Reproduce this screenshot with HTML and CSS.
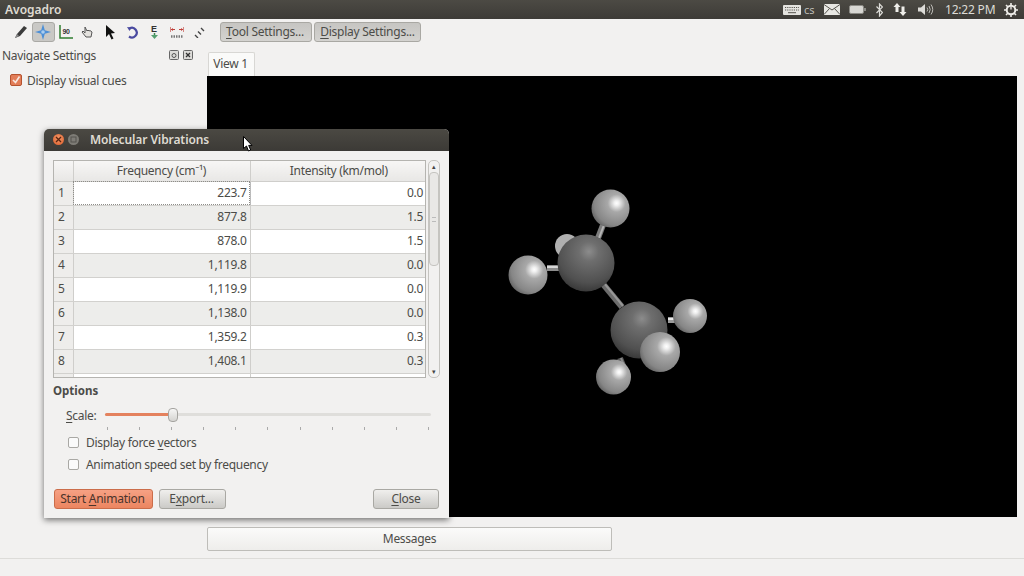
FILE: index.html
```html
<!DOCTYPE html>
<html lang="en">
<head>
<meta charset="utf-8">
<title>Avogadro</title>
<link rel="stylesheet" href="styles.css">
</head>
<body>
<div class="app">
  <header class="topbar">
    <span class="app-name">Avogadro</span>
    <div class="tray">
      <svg class="ti" width="18" height="10" viewBox="0 0 18 10"><rect width="18" height="10" rx="1" fill="#e4e3df"/><path d="M2 2.500h14M2 5h14" stroke="#55534d" stroke-width="1" stroke-dasharray="1.200 1"/><path d="M5 7.700h8" stroke="#55534d"/></svg>
      <span class="tray-cs">cs</span>
      <svg class="ti ti-mail" width="16" height="11" viewBox="0 0 16 11"><rect width="16" height="11" fill="#e8e7e3"/><path d="M0 .5l8 5.500 8-5.500M0 10.500l5.500-6M16 10.500l-5.500-6" stroke="#55534d" fill="none"/></svg>
      <svg class="ti ti-batt" width="17" height="9" viewBox="0 0 17 9"><rect x=".5" y=".5" width="14" height="8" rx="1.500" fill="#d8d7d3" stroke="#8b8a85"/><rect x="15" y="3" width="2" height="3" fill="#8b8a85"/></svg>
      <svg class="ti ti-bt" width="7" height="14" viewBox="0 0 7 14"><path d="M.5 3.500l6 6-3 3.500V1l3 3-6 6" fill="none" stroke="#dcdbd7" stroke-width="1.200"/></svg>
      <svg class="ti ti-net" width="14" height="13" viewBox="0 0 14 13"><path d="M4 0L7.500 4H5.500V9H2.500V4H.5z" fill="#eeede9"/><path d="M10 13L6.500 9H8.500V3.500h3V9h2z" fill="#eeede9"/></svg>
      <svg class="ti ti-vol" width="16" height="13" viewBox="0 0 16 13"><path d="M0 4.500h3L7 1v11L3 8.500H0z" fill="#dcdbd7"/><path d="M9 4.500q1.500 2 0 4M11 3q2.500 3.500 0 7M13 1.500q3.500 5 0 10" fill="none" stroke="#bdbcb7"/></svg>
      <span class="clock">12:22 PM</span>
      <svg class="ti ti-gear" width="14" height="14" viewBox="0 0 14 14"><circle cx="7" cy="7" r="4.300" fill="none" stroke="#eeede9" stroke-width="2"/><path d="M7 0v3M7 11v3M0 7h3M11 7h3M2 2l2 2M10 10l2 2M12 2l-2 2M4 10l-2 2" stroke="#eeede9" stroke-width="1.600"/><path d="M7 3.500v3" stroke="#eeede9" stroke-width="1.300"/></svg>
    </div>
  </header>

  <nav class="toolbar">
    <div class="tools">
      <span class="tool"><svg width="14" height="14" viewBox="0 0 14 14"><path d="M1 13l2-4 7-8 3 2-7 8z" fill="#3b3b3b"/><path d="M1 13l2-4 2 2z" fill="#8a8a8a"/></svg></span>
      <span class="tool tool-on"><svg width="16" height="16" viewBox="0 0 16 16"><path d="M8 0l1.800 6.200L16 8l-6.200 1.800L8 16l-1.800-6.200L0 8l6.200-1.800z" fill="#4d8fd6"/><circle cx="8" cy="8" r="1.800" fill="#a9cdf0"/></svg></span>
      <span class="tool"><svg width="14" height="14" viewBox="0 0 14 14"><path d="M1 0v13h13" fill="none" stroke="#2f7d2f" stroke-width="1.500"/><text x="3.500" y="9" class="ic-text">90</text></svg></span>
      <span class="tool"><svg width="13" height="14" viewBox="0 0 13 14"><path d="M4 2l2 4 1-1 1 1 1-.500 2 1.500-1 5H5L1 7l1-1 2 2z" fill="#e4e2de" stroke="#555" stroke-width="1"/></svg></span>
      <span class="tool"><svg width="11" height="15" viewBox="0 0 11 15"><path d="M1 0l9 8-4 .500 2.500 5-2 1-2.500-5.500-3 3z" fill="#111"/></svg></span>
      <span class="tool"><svg width="13" height="13" viewBox="0 0 13 13"><path d="M3.500 2.500A4.800 4.800 0 1 1 3 10.500" fill="none" stroke="#4a4aa0" stroke-width="2.200"/><path d="M1 1l4.500.500-2 3.500z" fill="#4a4aa0"/></svg></span>
      <span class="tool"><svg width="9" height="16" viewBox="0 0 9 16"><text x="1" y="8" class="ic-e">E</text><path d="M4.500 9v2" stroke="#3c8a55" stroke-width="1.500"/><path d="M1 11h7l-3.500 4z" fill="#55a070"/></svg></span>
      <span class="tool"><svg width="14" height="13" viewBox="0 0 14 13"><path d="M0 1v5M14 1v5M1 3.500h4M9 3.500h4" stroke="#c0403a" stroke-width="1.200"/><path d="M1 3.500l2-1.500v3zM13 3.500l-2-1.500v3z" fill="#c0403a"/><path d="M1 10.500h12" stroke="#777" stroke-width="2.500" stroke-dasharray="1.500 1"/></svg></span>
      <span class="tool"><svg width="11" height="11" viewBox="0 0 11 11"><path d="M1 8l3 3M4 4.500l3 3M7 1l3 3" stroke="#444" stroke-width="1.400"/></svg></span>
    </div>
    <div class="tb-buttons">
      <button class="btn btn-pressed btn-tool"><u>T</u>ool Settings...</button>
      <button class="btn btn-pressed btn-disp"><u>D</u>isplay Settings...</button>
    </div>
  </nav>

  <div class="workspace">
    <aside class="dock">
      <div class="dock-head">
        <span>Navigate Settings</span>
        <span class="dock-btns">
          <svg width="10" height="10" viewBox="0 0 10 10"><rect x=".5" y=".5" width="9" height="9" rx="1" fill="#dcdbd8" stroke="#666"/><circle cx="5" cy="5.500" r="2" fill="none" stroke="#555"/></svg>
          <svg width="10" height="10" viewBox="0 0 10 10"><rect x=".5" y=".5" width="9" height="9" rx="1" fill="#dcdbd8" stroke="#666"/><path d="M3 3l4 4M7 3l-4 4" stroke="#333" stroke-width="1.300"/></svg>
        </span>
      </div>
      <label class="dock-check">
        <span class="cb cb-on"><svg width="12" height="12" viewBox="0 0 12 12"><path d="M3 6l2.500 2.500L9.500 2.500" fill="none" stroke="#f7e7df" stroke-width="1.700"/></svg></span>
        <span>Display visual cues</span>
      </label>
    </aside>

    <main class="central">
      <div class="tab">View 1</div>
      <div class="view">
        <svg class="scene" viewBox="207 76 810 441" preserveAspectRatio="none">
          <defs>
            <radialGradient id="carbon" cx=".55" cy=".3" r=".78">
              <stop offset="0" stop-color="#8c8c8c"/><stop offset=".22" stop-color="#6e6e6e"/><stop offset=".7" stop-color="#505050"/><stop offset="1" stop-color="#2e2e2e"/>
            </radialGradient>
            <radialGradient id="hydrogen" cx=".66" cy=".36" r=".78">
              <stop offset="0" stop-color="#fff"/><stop offset=".08" stop-color="#f0f0f0"/><stop offset=".3" stop-color="#a8a8a8"/><stop offset=".75" stop-color="#868686"/><stop offset="1" stop-color="#555"/>
            </radialGradient>
          </defs>
          <g stroke-width="6">
            <path d="M603 284L622 307" stroke="#6c6c6c"/>
            <path d="M598 238L603 225" stroke="#7c7c7c"/>
            <path d="M547 268L562 268" stroke="#8c8c8c"/>
            <path d="M668 320L680 320" stroke="#9c9c9c"/>
            <path d="M624 368L620 358" stroke="#5c5c5c"/>
          </g>
          <g stroke-width="2">
            <path d="M604 283L623 306" stroke="#969696"/>
            <path d="M599 238L604 225" stroke="#b4b4b4"/>
            <path d="M547 267L562 267" stroke="#d8d8d8"/>
            <path d="M668 319L680 319" stroke="#e8e8e8"/>
            <path d="M625 368L621 358" stroke="#8c8c8c"/>
          </g>
          <circle cx="567" cy="246" r="12" fill="#b0b0b0"/>
          <circle cx="586" cy="263" r="28.500" fill="url(#carbon)"/>
          <circle cx="610.500" cy="208.500" r="19" fill="url(#hydrogen)"/>
          <circle cx="528" cy="275" r="19.500" fill="url(#hydrogen)"/>
          <circle cx="639" cy="330" r="28.500" fill="url(#carbon)"/>
          <circle cx="690" cy="316" r="17" fill="url(#hydrogen)"/>
          <circle cx="660" cy="352" r="20" fill="url(#hydrogen)"/>
          <circle cx="613.500" cy="377" r="17.500" fill="url(#hydrogen)"/>
        </svg>
      </div>
      <button class="messages">Messages</button>
    </main>
  </div>
  <footer class="status"></footer>
</div>

<section class="dialog">
  <div class="dlg-title">
    <span class="wbtn wbtn-close"><svg width="7" height="7" viewBox="0 0 7 7"><path d="M1 1l5 5M6 1l-5 5" stroke="#5a2510" stroke-width="1.300"/></svg></span>
    <span class="wbtn wbtn-max"><svg width="7" height="7" viewBox="0 0 7 7"><rect x="1" y="1" width="5" height="5" fill="none" stroke="#55534e"/></svg></span>
    <span class="dlg-name">Molecular Vibrations</span>
  </div>
  <div class="dlg-body">
    <div class="table-row">
      <div class="table-wrap">
        <table class="freq">
          <thead><tr><th class="corner"></th><th>Frequency (cm⁻¹)</th><th>Intensity (km/mol)</th></tr></thead>
          <tbody>
            <tr><th>1</th><td class="cur">223.7</td><td>0.0</td></tr>
            <tr class="alt"><th>2</th><td>877.8</td><td>1.5</td></tr>
            <tr><th>3</th><td>878.0</td><td>1.5</td></tr>
            <tr class="alt"><th>4</th><td>1,119.8</td><td>0.0</td></tr>
            <tr><th>5</th><td>1,119.9</td><td>0.0</td></tr>
            <tr class="alt"><th>6</th><td>1,138.0</td><td>0.0</td></tr>
            <tr><th>7</th><td>1,359.2</td><td>0.3</td></tr>
            <tr class="alt"><th>8</th><td>1,408.1</td><td>0.3</td></tr>
            <tr><th></th><td></td><td></td></tr>
          </tbody>
        </table>
      </div>
      <div class="scrollbar">
        <span class="sb-arrow">▴</span>
        <span class="sb-thumb"><span class="sb-grip"></span></span>
        <span class="sb-arrow">▾</span>
      </div>
    </div>
    <h2 class="opts">Options</h2>
    <div class="scale-row">
      <span class="scale-label"><u>S</u>cale:</span>
      <div class="slider">
        <div class="track"><div class="fill"></div><div class="knob"></div></div>
        <div class="ticks"><i></i><i></i><i></i><i></i><i></i><i></i><i></i><i></i><i></i><i></i><i></i></div>
      </div>
    </div>
    <label class="opt"><span class="cb"></span><span>Display force <u>v</u>ectors</span></label>
    <label class="opt"><span class="cb"></span><span>Animation speed set by frequency</span></label>
    <div class="dlg-buttons">
      <button class="btn btn-accent">Start <u>A</u>nimation</button>
      <button class="btn btn-export">E<u>x</u>port...</button>
      <button class="btn btn-close"><u>C</u>lose</button>
    </div>
  </div>
</section>

<svg class="cursor" width="10" height="16" viewBox="0 0 10 16"><path d="M.5.500v12l3-2.500 2 5 2.200-1-2-4.600H9z" fill="#fff" stroke="#000"/></svg>
</body>
</html>
```
FILE: styles.css
```css
* { box-sizing: border-box; }
html, body { margin: 0; padding: 0; }
body {
  width: 1024px; height: 576px; overflow: hidden; position: relative;
  background: #f2f1f0; color: #4c4c48;
  font-family: "Noto Sans", "Open Sans", sans-serif; font-size: 12px; letter-spacing: -.3px;
}
u { text-underline-offset: 2px; text-decoration-thickness: 1px; }
.app { display: flex; flex-direction: column; height: 576px; }

.topbar {
  height: 19px; flex: none; display: flex; justify-content: space-between; align-items: center;
  background: linear-gradient(#4c4a44, #3d3b37); color: #dfdbd2; padding: 0 6px 0 5px; letter-spacing: 0;
}
.app-name { font-weight: 600; font-size: 12px; }
.tray { display: flex; align-items: center; }
.tray-cs { margin-left: 3px; font-size: 11px; color: #bdbcb6; width: 20px; }
.ti { display: block; flex: none; }
.ti-batt { margin-left: 9px; }
.ti-bt { margin-left: 10px; }
.ti-net { margin-left: 10px; }
.ti-vol { margin-left: 11px; }
.clock { margin-left: 11px; width: 59px; font-size: 12px; color: #dcdbd6; letter-spacing: -.2px; }

.toolbar {
  height: 26px; flex: none; display: flex; align-items: center; padding: 0 0 0 10px; background: #f2f1f0;
}
.tools { display: flex; width: 200px; margin-right: 10px; }
.tool { width: 22.250px; height: 20px; display: flex; align-items: center; justify-content: center; flex: none; }
.tool-on { background: #c9c8c5; border: 1px solid #aaa9a5; border-radius: 3px; }
.ic-text { font-size: 7px; font-weight: 700; fill: #333; font-family: "Liberation Sans", sans-serif; }
.ic-e { font-size: 9px; font-weight: 700; fill: #333; font-family: "Liberation Sans", sans-serif; }
.tb-buttons { display: flex; gap: 2px; }
.btn {
  height: 20px; padding: 0 0 1px; border-radius: 3px; border: 1px solid #a9a8a3;
  font: 12px "Noto Sans", "Open Sans", sans-serif; color: #4c4c48; letter-spacing: -.25px;
  background: linear-gradient(#f0efed, #cbcac7); white-space: nowrap;
}
.btn-pressed { background: linear-gradient(#c6c5c2, #d4d3d0); }
.btn-tool { width: 92px; padding-right: 2px; }
.btn-disp { width: 107px; }

.workspace { flex: 1; display: flex; min-height: 0; }
.dock { width: 207px; flex: none; padding: 0 14px 0 2px; }
.dock-head { display: flex; justify-content: space-between; align-items: center; height: 20px; margin-bottom: 6px; }
.dock-btns { display: flex; gap: 4px; }
.dock-btns svg { display: block; }
.dock-check { display: flex; align-items: center; gap: 5px; padding-left: 8px; height: 18px; }
.cb { width: 12px; height: 12px; border-radius: 2px; flex: none; border: 1px solid #a5a4a0; background: linear-gradient(#eee, #fff); display: block; }
.cb svg { display: block; margin: -1px; }
.cb-on { background: #e27d58; border-color: #b5532f; }

.central { flex: 1; padding-right: 7px; padding-top: 7px; display: flex; flex-direction: column; align-items: flex-start; }
.tab {
  height: 24px; width: 47px; margin-left: 1px; padding: 0 2px 2px 0; background: #fafaf9; border: 1px solid #d8d7d4; border-bottom: 0;
  border-radius: 2px 2px 0 0; display: flex; align-items: center; justify-content: center;
}
.view { width: 810px; height: 441px; background: #000; flex: none; }
.scene { display: block; width: 100%; height: 100%; }
.messages {
  margin-top: 10px; width: 405px; height: 24px; padding: 0 0 2px; border: 1px solid #bebdb9; border-radius: 2px;
  background: linear-gradient(#fbfbfa, #eeedeb); font: 12px "Noto Sans", "Open Sans", sans-serif; color: #4c4c48; letter-spacing: -.3px;
}
.status { height: 18px; flex: none; border-top: 1px solid #dddcd9; }

.dialog {
  position: absolute; left: 44px; top: 129px; width: 405px; height: 389px;
  background: #f2f1f0; border-radius: 5px 5px 0 0;
  box-shadow: 0 2px 6px rgba(0,0,0,.55);
}
.dlg-title {
  height: 22px; display: flex; align-items: center; padding: 0 0 2px 9px;
  background: linear-gradient(#4b4943, #3c3a36); border-radius: 5px 5px 0 0; color: #dfdbd2;
}
.wbtn { width: 11px; height: 11px; border-radius: 50%; display: flex; align-items: center; justify-content: center; flex: none; }
.wbtn-close { background: radial-gradient(circle at 50% 40%, #f39a6a, #dc5a28); }
.wbtn-max { margin-left: 4px; background: #7e7c76; }
.dlg-name { margin-left: 11px; font-weight: 600; font-size: 12px; letter-spacing: -.1px; }
.dlg-body { padding: 9px 9px 0; }
.table-row { display: flex; gap: 2px; height: 218px; }
.table-wrap { width: 375px; height: 218px; overflow: hidden; border: 1px solid #b5b4b0; background: #fff; }
.freq { border-collapse: collapse; table-layout: fixed; width: 373px; font-size: 12px; }
.freq thead th { height: 20px; font-weight: 400; background: linear-gradient(#f7f6f5, #e8e7e5); border: 1px solid #cfcecb; border-top: 0; text-align: center; padding: 0; }
.freq thead th:first-child { border-left: 0; }
.freq thead th:last-child { border-right: 0; }
.freq .corner { width: 19px; }
.freq thead th:nth-child(2) { width: 177px; }
.freq tbody th { font-weight: 400; text-align: left; padding: 0 0 1px 4px; background: #eeedeb; border-bottom: 1px solid #d2d1ce; border-right: 1px solid #cfcecb; }
.freq tbody tr { height: 24px; }
.freq td { text-align: right; padding: 0 3px 1px 0; border-bottom: 1px solid #d2d1ce; border-right: 1px solid #cfcecb; background: #fff; }
.freq td:last-child { border-right: 0; padding-right: 4px; }
.freq .alt td { background: #ededeb; }
.freq td.cur { outline: 1px dotted #8e8d89; outline-offset: -1px; border-right-color: #bbb; }

.scrollbar { width: 12px; height: 218px; border: 1px solid #c5c4c0; border-radius: 5px; display: flex; flex-direction: column; background: #f2f1f0; align-items: center; overflow: hidden; }
.sb-arrow { height: 11px; font-size: 7px; line-height: 11px; color: #444; flex: none; }
.sb-thumb { width: 10px; height: 94px; background: #e9e8e6; border: 1px solid #c5c4c0; border-radius: 4px; flex: none; display: flex; align-items: center; justify-content: center; }
.sb-grip { width: 4px; height: 5px; border-top: 1px solid #bbb; border-bottom: 1px solid #bbb; }
.sb-arrow:last-child { margin-top: auto; }

.opts { margin: 6px 0 0; height: 14px; font-size: 11.500px; line-height: 14px; font-weight: 700; color: #4c4c48; letter-spacing: 0; }
.scale-row { display: flex; margin-top: 10px; padding-left: 13px; height: 23px; }
.scale-label { width: 39px; line-height: 15px; }
.slider { width: 326px; }
.track { height: 3px; margin-top: 5px; background: #dfdedb; border-radius: 2px; position: relative; }
.fill { width: 68px; height: 3px; background: #e4825e; border-radius: 2px; }
.knob { position: absolute; left: 63px; top: -5px; width: 10px; height: 14px; background: linear-gradient(#f6f6f5, #d5d4d1); border: 1px solid #a5a4a0; border-radius: 4px; }
.ticks { display: flex; justify-content: space-between; margin-top: 11px; padding: 0 2px; }
.ticks i { width: 1px; height: 3px; background: #aaa; display: block; }
.opt { display: flex; align-items: center; gap: 7px; margin-left: 15px; height: 22px; }
.opt .cb { width: 11px; height: 11px; background: #fafafa; border-color: #a9a8a4; }
.dlg-buttons { display: flex; margin-top: 14px; padding-left: 1px; }
.btn-accent { width: 99px; padding-right: 2px; background: linear-gradient(#f6a184, #ec8560); border-color: #cb6d4a; color: #4a342c; }
.btn-export { width: 67px; margin-left: 6px; padding-right: 2px; }
.btn-close { width: 66px; margin-left: auto; margin-right: 1px; }

.cursor { position: absolute; left: 243px; top: 136px; display: block; }
```
